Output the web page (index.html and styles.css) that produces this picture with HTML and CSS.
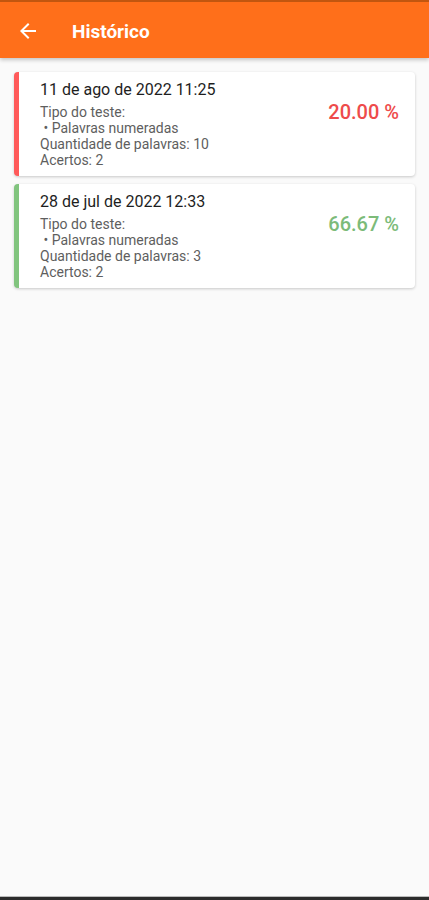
FILE: index.html
```html
<!DOCTYPE html>
<html>
<head>
    <meta charset="utf-8">
    <link rel="stylesheet" href="styles.css">
</head>
<body>
    <div class="appBar">
        <button class="backButton" title="Voltar">
            <svg viewBox="0 0 24 24" width="24" height="24"><path d="M20 11H7.83l5.59-5.59L12 4l-8 8 8 8 1.41-1.41L7.83 13H20v-2z" fill="#fff"/></svg>
        </button>
        <span class="title">Histórico</span>
    </div>
    <div class="content">
        <div class="card fail">
            <div class="info">
                <div class="date">11 de ago de 2022 11:25</div>
                <div class="detail">Tipo do teste:</div>
                <div class="detail">&nbsp;• Palavras numeradas</div>
                <div class="detail">Quantidade de palavras: 10</div>
                <div class="detail">Acertos: 2</div>
            </div>
            <div class="score">20.00 %</div>
        </div>
        <div class="card pass">
            <div class="info">
                <div class="date">28 de jul de 2022 12:33</div>
                <div class="detail">Tipo do teste:</div>
                <div class="detail">&nbsp;• Palavras numeradas</div>
                <div class="detail">Quantidade de palavras: 3</div>
                <div class="detail">Acertos: 2</div>
            </div>
            <div class="score">66.67 %</div>
        </div>
    </div>
    <div class="navBar"></div>
</body>
</html>
```

FILE: styles.css
```css
html, body {
    margin: 0px;
    padding: 0px;
    height: 100%;
}

body {
    display: flex;
    flex-direction: column;
    background-color: #fafafa;
    font-family: Roboto, "Noto Sans", sans-serif;
    overflow: hidden;
}

.appBar {
    display: flex;
    align-items: center;
    height: 56px;
    border-top: 2px solid #c2560f;
    background-color: #ff6f1a;
    box-shadow: 0 2px 4px rgba(0, 0, 0, 0.22);
    position: relative;
    z-index: 1;
}

.backButton {
    display: flex;
    align-items: center;
    justify-content: center;
    margin-left: 16px;
    margin-top: 2px;
    padding: 0;
    width: 24px;
    height: 24px;
    border: none;
    background: none;
}

.title {
    margin-left: 32px;
    margin-top: 2px;
    color: #fff;
    font-size: 19px;
    font-weight: 700;
}

.content {
    flex: 1;
    display: flex;
    flex-direction: column;
    gap: 8px;
    padding: 14px 14px 0 14px;
}

.card {
    display: flex;
    justify-content: space-between;
    padding: 8px 16px 8px 21px;
    background-color: #fff;
    border-left: 5px solid;
    border-radius: 4px;
    box-shadow: 0 1px 3px rgba(0, 0, 0, 0.2);
}

.card.fail {
    border-left-color: #ff5a5a;
}

.card.pass {
    border-left-color: #81c47e;
}

.date {
    font-size: 16px;
    line-height: 20px;
    color: #1e1e1e;
    margin-bottom: 4px;
}

.detail {
    font-size: 14px;
    line-height: 16px;
    color: #5e5e5e;
}

.score {
    margin-top: 20px;
    font-size: 20px;
    line-height: 24px;
    font-weight: 500;
}

.fail .score {
    color: #ee4b4b;
}

.pass .score {
    color: #7cbb79;
}

.navBar {
    height: 3px;
    background-color: #2c2c2c;
    border-top: 1px solid #bbb;
}
```
